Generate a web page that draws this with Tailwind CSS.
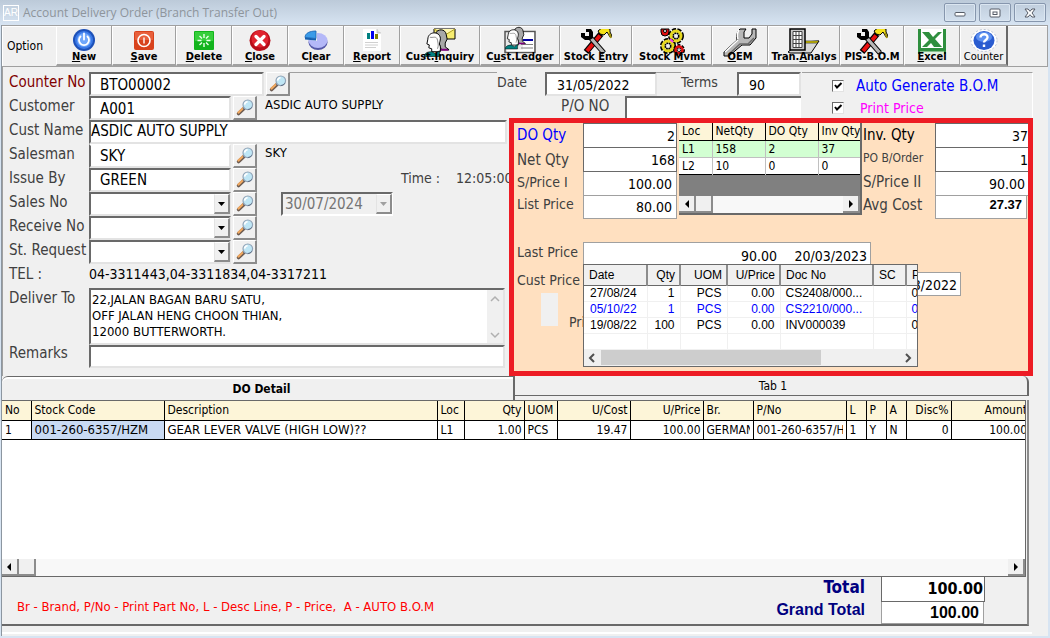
<!DOCTYPE html>
<html lang="en">

<head>
    <meta charset="UTF-8">
    <meta name="viewport" content="width=device-width, initial-scale=1.0">
    <title>Account Delivery Order (Branch Transfer Out)</title>
    <script src="https://cdn.jsdelivr.net/npm/@tailwindcss/browser@4"></script>
</head>

<body class="min-h-screen overflow-hidden bg-[#d7e4f2] font-['DejaVu_Sans_Condensed','Noto_Sans',sans-serif] text-sm text-black">

    <!-- Shared icons -->
    <svg class="hidden">
        <symbol id="lens" viewBox="0 0 18 18">
            <path d="M8.500 9 2.600 14.500" stroke="#6b5a50" stroke-width="3.600" stroke-linecap="round" />
            <path d="M7.500 8.800 2.400 13.600" stroke="#f0a860" stroke-width="2.200" stroke-linecap="round" />
            <path d="m9.500 7.800-2 2" stroke="#606878" stroke-width="2.600" />
            <circle cx="11.800" cy="5.800" r="4.800" fill="#bfe6f5" stroke="#93a5b8" stroke-width="1.200" />
            <path d="M8.600 5.600a3.200 3.200 0 0 1 3-2.800" stroke="#fff" stroke-width="1.600" fill="none" />
            <path d="M15.800 8.400a5 5 0 0 1-4 2.200" stroke="#5f6f86" stroke-width="1" fill="none" />
        </symbol>
        <symbol id="tools" viewBox="0 0 32 26">
            <path d="M21 5 6 23" stroke="#000" stroke-width="6" />
            <path d="M20 6.500 7 22" stroke="#e81010" stroke-width="4" />
            <path d="m9 7 15 17" stroke="#000" stroke-width="5" />
            <path d="m9 7 14.500 16.500" stroke="#b8b8b8" stroke-width="3.400" />
            <path d="M1 4h4v3h4V3H6V0h5l2 3v6l-3 2H5L1 8z" fill="#000" />
            <path d="m18 2 5-4 7 2v3l2 4-2 1-3-5-3 3-4-1z" fill="#f4e11a" stroke="#000" />
            <path d="m29 4 2 5" stroke="#a09010" stroke-width="2" />
        </symbol>
        <symbol id="heads" viewBox="0 0 28 28">
            <path d="M12 4c2-5 10-5 11 1l1 5-2 4v4l4 3h-8z" fill="#a8a8a8" stroke="#000" />
            <path d="M14 20h10l2 2H13z" fill="#800080" />
            <path d="M4 10C4 2 16 1 17 9c0 3-1 4-1 6l1 3v5H8v-3l-3-1 .5-3L3 15z" fill="#fff" stroke="#000" />
            <path d="M6 8c3 1 7-2 8 3s1 6 0 9" fill="none" stroke="#888" />
            <path d="M0 28c1-4 4-5 8-5l4 2 4-3v6z" fill="#008080" stroke="#000" stroke-width=".6" />
        </symbol>
    </svg>

    <!-- Title bar -->
    <header class="flex h-[25px] items-center bg-linear-to-b from-[#bccad9] to-[#d7e4f2] pl-[3px] pr-1">
        <span class="flex size-4 items-center justify-center overflow-hidden border border-white font-['Liberation_Sans'] text-[10px] leading-3 text-white">AR</span>
        <h1 class="ml-1 flex-1 font-['Open_Sans',sans-serif] text-xs text-[#8e959c]">Account Delivery Order (Branch Transfer Out)</h1>
        <div class="flex h-[19px] gap-[3px]">
            <button aria-label="Minimize" class="flex w-8 items-center justify-center rounded-xs border border-[#8696ad] shadow-[inset_0_0_0_1px_#dbe6f1]">
                <svg class="h-3 w-3" viewBox="0 0 12 12"><rect x="1" y="5.500" width="10" height="3.500" rx="1" fill="#fff" stroke="#555b66" /></svg>
            </button>
            <button aria-label="Maximize" class="flex w-8 items-center justify-center rounded-xs border border-[#8696ad] shadow-[inset_0_0_0_1px_#dbe6f1]">
                <svg class="h-3 w-3" viewBox="0 0 12 12"><rect x="1" y="2" width="10" height="8" rx="1" fill="#fff" stroke="#555b66" /><rect x="4" y="5" width="4" height="2.500" fill="#fff" stroke="#555b66" /></svg>
            </button>
            <button aria-label="Close window" class="flex w-8 items-center justify-center rounded-xs border border-[#8696ad] shadow-[inset_0_0_0_1px_#dbe6f1]">
                <svg class="h-3 w-3" viewBox="0 0 12 12"><path d="M1 2h3l2 2.300L8 2h3L8 6l3 4H8L6 7.700 4 10H1l3-4z" fill="#fff" stroke="#555b66" /></svg>
            </button>
        </div>
    </header>

    <div class="ml-px mr-[2px] border-l border-[#8c96a0] bg-[#f0f0f0]">

        <!-- Toolbar -->
        <nav class="flex h-[42px] border-y border-r border-[#a0a0a0] text-[11px] font-bold leading-3 shadow-[inset_1px_1px_0_#fff]">
            <span class="w-[54px] self-center pl-[5px] text-xs font-normal">Option</span>
            <button class="flex w-14 flex-col items-center border-r border-b-2 border-l border-r-[#a0a0a0] border-b-[#a0a0a0] border-l-white pt-[3px]">
                <svg class="size-[22px] shrink-0 overflow-visible" viewBox="0 0 22 22"><circle cx="11" cy="11" r="11" fill="#1c50b8" /><circle cx="11" cy="11" r="9" fill="#3b7ae8" /><circle cx="11" cy="11" r="7" fill="#6fa6fa" /><path d="M7.500 7.500a5 5 0 1 0 7 0M11 4.500v6" fill="none" stroke="#fff" stroke-width="1.800" stroke-linecap="round" /></svg>
                <span class="relative whitespace-nowrap"><u>N</u>ew</span>
            </button>
            <button class="flex w-16 flex-col items-center border-r border-b-2 border-l border-r-[#a0a0a0] border-b-[#a0a0a0] border-l-white pt-[3px]">
                <svg class="size-[22px] shrink-0 overflow-visible" viewBox="0 0 22 22"><rect x="1" y="2" width="20" height="19" rx="2" fill="#d8421c" /><rect x="2" y="3" width="18" height="8" fill="#e8603c" /><circle cx="11" cy="11.500" r="6" fill="none" stroke="#fff" stroke-width="1.600" /><path d="M11 8.500v6" stroke="#fff" stroke-width="1.400" /></svg>
                <span class="relative whitespace-nowrap"><u>S</u>ave</span>
            </button>
            <button class="flex w-14 flex-col items-center border-r border-b-2 border-l border-r-[#a0a0a0] border-b-[#a0a0a0] border-l-white pt-[3px]">
                <svg class="size-[22px] shrink-0 overflow-visible" viewBox="0 0 22 22"><rect x="1" y="2" width="20" height="19" rx="1" fill="#12b41c" /><rect x="2" y="3" width="18" height="9" fill="#35ce3a" /><path d="M11 5v4M11 14v4M4.500 11.500h4M13.500 11.500h4M6.500 7l2.500 2.500M13 13.500l2.500 2.500M15.500 7 13 9.500M9 13.500 6.500 16" stroke="#e8ffe8" stroke-width="1.400" /></svg>
                <span class="relative whitespace-nowrap"><u>D</u>elete</span>
            </button>
            <button class="flex w-14 flex-col items-center border-r border-b-2 border-l border-r-[#a0a0a0] border-b-[#a0a0a0] border-l-white pt-[3px]">
                <svg class="size-[22px] shrink-0 overflow-visible" viewBox="0 0 22 22"><circle cx="11" cy="11.500" r="10.500" fill="#b80c18" /><circle cx="11" cy="10" r="8.500" fill="#e02430" /><path d="m7 7.500 8 8M15 7.500l-8 8" stroke="#fff" stroke-width="3.200" stroke-linecap="round" /></svg>
                <span class="relative whitespace-nowrap"><u>C</u>lose</span>
            </button>
            <button class="flex w-14 flex-col items-center border-r border-b-2 border-l border-r-[#a0a0a0] border-b-[#a0a0a0] border-l-white pt-[3px]">
                <svg class="size-[22px] shrink-0 overflow-visible" viewBox="0 0 22 22"><ellipse cx="13" cy="13.500" rx="9.500" ry="7.500" fill="#5458a8" /><ellipse cx="13" cy="11.500" rx="9.500" ry="7.500" fill="#b4b8f8" /><path d="M12 12V3H0v7z" fill="#f0f0f0" /><path d="M11 9.500V2C5 2 0 4 0 8.500z" fill="#3a9be8" stroke="#1460b0" stroke-width=".8" /><path d="M0 8.500v2l11 1v-2z" fill="#1460b0" /></svg>
                <span class="relative whitespace-nowrap">C<u>l</u>ear</span>
            </button>
            <button class="flex w-14 flex-col items-center border-r border-b-2 border-l border-r-[#a0a0a0] border-b-[#a0a0a0] border-l-white pt-[3px]">
                <svg class="size-[22px] shrink-0 overflow-visible" viewBox="0 0 22 22"><path d="M2 0h14l4 4v18H2z" fill="#fff" /><path d="M16 0v4h4" fill="#ddd" stroke="#aaa" stroke-width=".6" /><path d="M6 4h3v6H6z" fill="#008080" /><path d="M10 2h3v8h-3z" fill="#0000f0" /><path d="M14 5h3v5h-3z" fill="#808000" /><path d="M4 13.500h13M4 16h13M4 18.500h11" stroke="#d0d0d0" /></svg>
                <span class="relative whitespace-nowrap"><u>R</u>eport</span>
            </button>
            <button class="flex w-20 flex-col items-center border-r border-b-2 border-l border-r-[#a0a0a0] border-b-[#a0a0a0] border-l-white pt-[3px]">
                <svg class="size-[22px] shrink-0 overflow-visible" viewBox="0 0 22 22"><path d="M5 0h21v10H5z" fill="#f6ec70" stroke="#000" /><path d="m5 0 11 6L26 0" fill="#fff8b0" stroke="#b0a020" /><use href="#heads" x="-5" y="0" width="27" height="28" /></svg>
                <span class="relative whitespace-nowrap">Cust.<u>I</u>nquiry</span>
            </button>
            <button class="flex w-20 flex-col items-center border-r border-b-2 border-l border-r-[#a0a0a0] border-b-[#a0a0a0] border-l-white pt-[3px]">
                <svg class="size-[22px] shrink-0 overflow-visible" viewBox="0 0 22 22"><path d="M-4 2.500h30v21H-4z" fill="#e8e8e8" stroke="#555" stroke-width="1.500" /><path d="M14 3.500h11v19H-2v-2h16z" fill="#fff" /><path d="M14 11h10" stroke="#0000a0" stroke-width="2" /><path d="M12 15.500h12M12 19h12" stroke="#808080" /><use href="#heads" x="-4" y="-3" width="22" height="24" /></svg>
                <span class="relative whitespace-nowrap">C<u>u</u>st.Ledger</span>
            </button>
            <button class="flex w-[72px] flex-col items-center border-r border-b-2 border-l border-r-[#a0a0a0] border-b-[#a0a0a0] border-l-white pt-[3px]">
                <svg class="size-[22px] shrink-0 overflow-visible" viewBox="0 0 22 22"><use href="#tools" x="-5" y="0" width="32" height="26" /></svg>
                <span class="relative whitespace-nowrap">Stock <u>E</u>ntry</span>
            </button>
            <button class="flex w-20 flex-col items-center border-r border-b-2 border-l border-r-[#a0a0a0] border-b-[#a0a0a0] border-l-white pt-[3px]">
                <svg class="size-[22px] shrink-0 overflow-visible" viewBox="0 0 22 22">
                    <g fill="none">
                        <path d="M0 0h8v3a4 4 0 0 1-8 0z" fill="#e01010" stroke="#000" /><circle cx="4" cy="2" r="1.500" fill="#fff" stroke="#000" />
                        <circle cx="15" cy="7" r="5" stroke="#000" stroke-width="6" stroke-dasharray="3 1" /><circle cx="15" cy="7" r="5" stroke="#e6d820" stroke-width="3" />
                        <circle cx="7" cy="17" r="5" stroke="#000" stroke-width="6" stroke-dasharray="3 1" /><circle cx="7" cy="17" r="5" stroke="#e6d820" stroke-width="3" />
                        <circle cx="18" cy="21" r="3.500" stroke="#000" stroke-width="5" stroke-dasharray="2 1" /><circle cx="18" cy="21" r="3.500" stroke="#e01010" stroke-width="2.500" />
                        <path d="m9 10 3 3" stroke="#f040f0" stroke-width="2" />
                    </g>
                </svg>
                <span class="relative whitespace-nowrap">Stock <u>M</u>vmt</span>
            </button>
            <button class="flex w-14 flex-col items-center border-r border-b-2 border-l border-r-[#a0a0a0] border-b-[#a0a0a0] border-l-white pt-[3px]">
                <svg class="size-[22px] shrink-0 overflow-visible" viewBox="0 0 22 22"><path d="m-5 23 13-12c-1-5 0-8 3-11h6l-2 3v6h5l3-4V0h4v9l-6 7h-8L0 27h-5z" fill="#b8b8b8" stroke="#000" /><path d="M-4 23 9 11M10 1c-2 3-2 6-1 9" stroke="#fff" stroke-width="1.500" fill="none" /><path d="m-1 26 12-11h8l6-6" stroke="#686868" stroke-width="1.500" fill="none" /></svg>
                <span class="relative whitespace-nowrap"><u>O</u>EM</span>
            </button>
            <button class="flex w-[72px] flex-col items-center border-r border-b-2 border-l border-r-[#a0a0a0] border-b-[#a0a0a0] border-l-white pt-[3px]">
                <svg class="size-[22px] shrink-0 overflow-visible" viewBox="0 0 22 22"><path d="m10 13 16-1-8 12H-3l-2-1 4-3z" fill="#d8d8d8" stroke="#000" /><path d="M12 12h14l-2 2H12z" fill="#f0e010" stroke="#000" stroke-width=".6" /><path d="M-3 0h15v21H-3z" fill="#c8c8c8" stroke="#000" stroke-width="1.500" /><path d="M0 2.500h9v16H0z" fill="#fff" /><path d="M0 2.500h9v16H0zM3 2.500v16M6 2.500v16M0 6.500h9M0 10.500h9M0 14.500h9" fill="none" stroke="#404040" stroke-width="1" /></svg>
                <span class="relative whitespace-nowrap">Tran.<u>A</u>nalys</span>
            </button>
            <button class="flex w-16 flex-col items-center border-r border-b-2 border-l border-r-[#a0a0a0] border-b-[#a0a0a0] border-l-white pt-[3px]">
                <svg class="size-[22px] shrink-0 overflow-visible" viewBox="0 0 22 22"><use href="#tools" x="-5" y="0" width="32" height="26" /></svg>
                <span class="relative whitespace-nowrap">PIS-B.O.M</span>
            </button>
            <button class="flex w-14 flex-col items-center border-r border-b-2 border-l border-r-[#a0a0a0] border-b-[#a0a0a0] border-l-white pt-[3px]">
                <svg class="size-[22px] shrink-0 overflow-visible" viewBox="0 0 22 22"><path d="M-3 0h28v25H-3z" fill="#2f8f3e" /><path d="M0 0h22v19H0z" fill="#fff" /><path d="M1 3h7l4 5 5-5h4l-7 7 7 8h-8l-3-4-4 4H1l7-7z" fill="#2f8f3e" /><path d="M-1 24h24" stroke="#e0f0e0" stroke-width="3" /></svg>
                <span class="relative whitespace-nowrap"><u>E</u>xcel</span>
            </button>
            <button class="flex w-12 flex-col items-center border-r-2 border-b-2 border-l border-r-[#696969] border-b-[#a0a0a0] border-l-white pt-[3px] font-normal">
                <svg class="size-[22px] shrink-0 overflow-visible" viewBox="0 0 22 22"><ellipse cx="11" cy="11.500" rx="13" ry="11" fill="#fff" stroke="#a8b4c8" stroke-width=".8" stroke-dasharray="2 2" /><ellipse cx="11" cy="11.500" rx="10.500" ry="9.500" fill="#2a5cd0" /><ellipse cx="11" cy="8" rx="8" ry="5" fill="#5c90f0" /><path d="M7.500 8.500c0-4.500 7.500-4 7 0-.2 2.500-3.500 2.500-3.500 5M11 15.500V18" fill="none" stroke="#fff" stroke-width="2.400" /></svg>
                <span class="relative whitespace-nowrap">Counter</span>
            </button>
        </nav>

        <!-- Document header -->
        <form class="mr-[15px] border-l border-[#a0a0a0] pt-[5px] text-[#404040]">
            <div class="flex">
                <div class="flex w-[494px] flex-col text-[15px]">
                    <div class="flex h-6">
                        <label for="counterNo" class="w-[86px] pl-[6px] leading-5 whitespace-nowrap text-[#800000]">Counter No</label>
                        <input id="counterNo" value="BTO00002" class="h-6 w-[175px] border-2 border-t-[#696969] border-r-[#e3e3e3] border-b-[#e3e3e3] border-l-[#696969] bg-white pt-[2px] pl-[9px] text-black">
                        <button type="button" aria-label="Find counter" class="ml-[2px] flex w-6 items-start justify-center border-t border-r-2 border-b-2 border-l border-t-white border-r-[#8c8c8c] border-b-[#8c8c8c] border-l-white pt-[2px]"><svg class="size-[18px]"><use href="#lens" /></svg></button>
                        <span class="flex-1 border-t border-[#a0a0a0]"></span>
                    </div>
                    <div class="flex h-[22px]">
                        <label for="customer" class="w-[86px] pl-[6px] leading-5">Customer</label>
                        <input id="customer" value="A001" class="h-6 w-[142px] border-2 border-t-[#696969] border-r-[#e3e3e3] border-b-[#e3e3e3] border-l-[#696969] bg-white pt-[2px] pl-[9px] text-black">
                        <button type="button" aria-label="Find customer" class="ml-[2px] flex h-6 w-6 items-start justify-center border-t border-r-2 border-b-2 border-l border-t-white border-r-[#8c8c8c] border-b-[#8c8c8c] border-l-white pt-[2px]"><svg class="size-[18px]"><use href="#lens" /></svg></button>
                        <span class="ml-2 text-[13px] leading-[18px] text-black">ASDIC AUTO SUPPLY</span>
                    </div>
                </div>
                <div class="w-[305px]">
                    <div class="flex h-6">
                        <label for="date" class="w-12 leading-5">Date</label>
                        <input id="date" value="31/05/2022" class="h-6 w-28 border-2 border-t-[#696969] border-r-[#e3e3e3] border-b-[#e3e3e3] border-l-[#696969] bg-white pt-[2px] pl-[10px] text-black">
                        <span class="w-6 border-t border-[#a0a0a0]"></span>
                        <label for="terms" class="w-14 leading-5">Terms</label>
                        <input id="terms" value="90" class="h-6 w-16 border-2 border-t-[#696969] border-r-[#e3e3e3] border-b-[#e3e3e3] border-l-[#696969] bg-white pt-[2px] pl-[10px] text-black">
                    </div>
                    <div class="flex h-[22px] pl-16">
                        <label for="poNo" class="w-16 text-[15px] leading-5">P/O NO</label>
                        <input id="poNo" class="h-[22px] w-44 border-t-2 border-l-2 border-[#696969] bg-white px-1 text-black">
                    </div>
                </div>
                <div class="flex flex-1 flex-col gap-1 border-t border-r border-t-[#a0a0a0] border-r-white pt-1 pl-[30px]">
                    <div class="flex items-center leading-[18px]">
                        <span class="relative mr-3 size-3">
                            <input type="checkbox" id="autoBom" checked class="block size-3 appearance-none border border-t-[#696969] border-r-[#e3e3e3] border-b-[#e3e3e3] border-l-[#696969] bg-white">
                            <svg class="pointer-events-none absolute inset-0 size-3" viewBox="0 0 12 12"><path d="m3 5 2 2.500 4.500-4.500" fill="none" stroke="#000" stroke-width="2" /></svg>
                        </span>
                        <label for="autoBom" class="text-[15px] text-[#0000ff]">Auto Generate B.O.M</label>
                    </div>
                    <div class="flex items-center leading-[18px]">
                        <span class="relative mr-4 size-3">
                            <input type="checkbox" id="printPrice" checked class="block size-3 appearance-none border border-t-[#696969] border-r-[#e3e3e3] border-b-[#e3e3e3] border-l-[#696969] bg-white">
                            <svg class="pointer-events-none absolute inset-0 size-3" viewBox="0 0 12 12"><path d="m3 5 2 2.500 4.500-4.500" fill="none" stroke="#000" stroke-width="2" /></svg>
                        </span>
                        <label for="printPrice" class="text-[#ff00ff]">Print Price</label>
                    </div>
                </div>
            </div>

            <div class="flex">
                <div class="min-w-0 flex-1 overflow-hidden pt-[2px] text-[15px]">
                    <div class="flex h-6">
                        <label for="custName" class="w-[86px] pl-[6px] leading-5">Cust Name</label>
                        <input id="custName" value="ASDIC AUTO SUPPLY" class="mr-[2px] min-w-0 flex-1 border-2 border-t-[#696969] border-r-[#e3e3e3] border-b-[#e3e3e3] border-l-[#696969] bg-white text-black">
                    </div>
                    <div class="flex h-6">
                        <label for="salesman" class="w-[86px] pl-[6px] leading-5">Salesman</label>
                        <input id="salesman" value="SKY" class="w-[142px] border-2 border-t-white border-r-[#e3e3e3] border-b-[#e3e3e3] border-l-[#696969] bg-white pt-[2px] pl-[9px] text-black">
                        <button type="button" aria-label="Find salesman" class="ml-[2px] flex w-6 items-start justify-center border-t border-r-2 border-b-2 border-l border-t-white border-r-[#8c8c8c] border-b-[#8c8c8c] border-l-white pt-[2px]"><svg class="size-[18px]"><use href="#lens" /></svg></button>
                        <span class="ml-2 text-[13px] leading-[18px] text-black">SKY</span>
                    </div>
                    <div class="flex h-6">
                        <label for="issueBy" class="w-[86px] pl-[6px] leading-5">Issue By</label>
                        <input id="issueBy" value="GREEN" class="w-[142px] border-2 border-t-[#696969] border-r-[#e3e3e3] border-b-[#e3e3e3] border-l-[#696969] bg-white pt-[2px] pl-[9px] text-black">
                        <button type="button" aria-label="Find user" class="ml-[2px] flex w-6 items-start justify-center border-t border-r-2 border-b-2 border-l border-t-white border-r-[#8c8c8c] border-b-[#8c8c8c] border-l-white pt-[2px]"><svg class="size-[18px]"><use href="#lens" /></svg></button>
                        <span class="ml-auto w-[108px] text-sm leading-5 whitespace-pre">Time :    12:05:00</span>
                    </div>
                    <div class="flex">
                        <div>
                            <div class="flex h-6">
                                <label for="salesNo" class="w-[86px] pl-[6px] leading-5">Sales No</label>
                                <span class="relative w-[142px]">
                                    <select id="salesNo" class="h-6 w-full appearance-none border-2 border-t-[#696969] border-r-[#e3e3e3] border-b-[#e3e3e3] border-l-[#696969] bg-white text-black"><option></option></select>
                                    <svg class="pointer-events-none absolute top-[2px] right-[1px] h-5 w-4 border-t border-r-2 border-b-2 border-l border-t-white border-r-[#8c8c8c] border-b-[#8c8c8c] border-l-[#e3e3e3] bg-[#f0f0f0]" viewBox="0 0 13 17"><path d="M3 7h7L6.500 11z" fill="#000" /></svg>
                                </span>
                                <button type="button" aria-label="Find sales no" class="ml-[2px] flex w-6 items-start justify-center border-t border-r-2 border-b-2 border-l border-t-white border-r-[#8c8c8c] border-b-[#8c8c8c] border-l-white pt-[2px]"><svg class="size-[18px]"><use href="#lens" /></svg></button>
                            </div>
                            <div class="flex h-6">
                                <label for="receiveNo" class="w-[86px] pl-[6px] leading-5 whitespace-nowrap">Receive No</label>
                                <span class="relative w-[142px]">
                                    <select id="receiveNo" class="h-6 w-full appearance-none border-2 border-t-[#696969] border-r-[#e3e3e3] border-b-[#e3e3e3] border-l-[#696969] bg-white text-black"><option></option></select>
                                    <svg class="pointer-events-none absolute top-[2px] right-[1px] h-5 w-4 border-t border-r-2 border-b-2 border-l border-t-white border-r-[#8c8c8c] border-b-[#8c8c8c] border-l-[#e3e3e3] bg-[#f0f0f0]" viewBox="0 0 13 17"><path d="M3 7h7L6.500 11z" fill="#000" /></svg>
                                </span>
                                <button type="button" aria-label="Find receive no" class="ml-[2px] flex w-6 items-start justify-center border-t border-r-2 border-b-2 border-l border-t-white border-r-[#8c8c8c] border-b-[#8c8c8c] border-l-white pt-[2px]"><svg class="size-[18px]"><use href="#lens" /></svg></button>
                            </div>
                            <div class="flex h-6">
                                <label for="stRequest" class="w-[86px] pl-[6px] leading-5 whitespace-nowrap">St. Request</label>
                                <span class="relative w-[142px]">
                                    <select id="stRequest" class="h-6 w-full appearance-none border-2 border-t-[#696969] border-r-[#e3e3e3] border-b-[#e3e3e3] border-l-[#696969] bg-white text-black"><option></option></select>
                                    <svg class="pointer-events-none absolute top-[2px] right-[1px] h-5 w-4 border-t border-r-2 border-b-2 border-l border-t-white border-r-[#8c8c8c] border-b-[#8c8c8c] border-l-[#e3e3e3] bg-[#f0f0f0]" viewBox="0 0 13 17"><path d="M3 7h7L6.500 11z" fill="#000" /></svg>
                                </span>
                                <button type="button" aria-label="Find request" class="ml-[2px] flex w-6 items-start justify-center border-t border-r-2 border-b-2 border-l border-t-white border-r-[#8c8c8c] border-b-[#8c8c8c] border-l-white pt-[2px]"><svg class="size-[18px]"><use href="#lens" /></svg></button>
                            </div>
                        </div>
                        <span class="relative ml-6 h-6 w-28">
                            <select disabled aria-label="Document date" class="h-6 w-full appearance-none border-2 border-t-[#696969] border-r-white border-b-white border-l-[#696969] pl-[2px] text-[#757575]"><option>30/07/2024</option></select>
                            <svg class="pointer-events-none absolute top-[2px] right-[1px] h-5 w-4 border-t border-r-2 border-b-2 border-l border-t-white border-r-[#8c8c8c] border-b-[#8c8c8c] border-l-[#e3e3e3] bg-[#f0f0f0]" viewBox="0 0 13 17"><path d="M3 7h7L6.500 11z" fill="#a0a0a0" /></svg>
                        </span>
                    </div>
                    <div class="flex h-6">
                        <span class="w-[86px] pl-[6px] leading-5">TEL :</span>
                        <span class="text-sm leading-5 text-black">04-3311443,04-3311834,04-3317211</span>
                    </div>
                    <div class="flex h-[57px]">
                        <label for="deliverTo" class="w-[86px] pl-[6px] leading-5">Deliver To</label>
                        <div class="mr-1 flex min-w-0 flex-1 border-2 border-t-[#696969] border-r-[#e3e3e3] border-b-[#e3e3e3] border-l-[#696969] bg-white">
                            <textarea id="deliverTo" class="flex-1 resize-none overflow-hidden pt-[2px] pl-px text-[13px] leading-4 text-black">22,JALAN BAGAN BARU SATU,
OFF JALAN HENG CHOON THIAN,
12000 BUTTERWORTH.</textarea>
                            <svg class="w-4 bg-[#f0f0f0]" viewBox="0 0 16 53"><path d="m4 11 4-4 4 4M4 43l4 4 4-4" fill="none" stroke="#b0b0b0" stroke-width="1.500" /></svg>
                        </div>
                    </div>
                    <div class="flex h-[23px]">
                        <label for="remarks" class="w-[86px] pl-[6px] leading-4">Remarks</label>
                        <input id="remarks" class="mr-1 min-w-0 flex-1 border-2 border-t-[#696969] border-r-[#e3e3e3] border-b-[#e3e3e3] border-l-[#696969] bg-white text-black">
                    </div>
                </div>

                <!-- Stock and price panel -->
                <section class="h-[258px] w-[524px] border-[5px] border-[#ed1c24] bg-[#ffe0c0]">
                    <div class="grid grid-cols-[69px_94px_185px_73px_1fr] grid-rows-[25px_24px_24px_23px]">
                        <label for="doQty" class="pl-[3px] text-[15px] leading-6 text-[#0000ff]">DO Qty</label>
                        <input id="doQty" value="2" class="border border-[#696969] bg-white pr-px text-right text-black">
                        <div class="row-span-4 ml-[2px] flex h-[92px] flex-col overflow-hidden border-r-2 border-b-2 border-[#696969] bg-[#808080] text-xs text-black">
                            <table class="w-[190px] table-fixed text-left whitespace-nowrap">
                                <thead>
                                    <tr class="h-[17px] bg-[#fdf5d8]">
                                        <th class="w-[33px] border-r border-b border-black pl-[3px] font-normal">Loc</th>
                                        <th class="w-[53px] border-r border-b border-black pl-[3px] font-normal">NetQty</th>
                                        <th class="w-[53px] border-r border-b border-black pl-[3px] font-normal">DO Qty</th>
                                        <th class="border-b border-black pl-[3px] font-normal">Inv Qty</th>
                                    </tr>
                                </thead>
                                <tbody>
                                    <tr class="h-[17px] border-b border-[#c0c0c0] bg-[#d2ffd2]">
                                        <td class="border-r border-[#c0c0c0] pl-[3px]">L1</td>
                                        <td class="border-r border-[#c0c0c0] pl-[3px]">158</td>
                                        <td class="border-r border-[#c0c0c0] pl-[3px]">2</td>
                                        <td class="pl-[3px]">37</td>
                                    </tr>
                                    <tr class="h-[17px] border-b border-black bg-white">
                                        <td class="border-r border-r-[#c0c0c0] pl-[3px]">L2</td>
                                        <td class="border-r border-r-[#c0c0c0] pl-[3px]">10</td>
                                        <td class="border-r border-r-[#c0c0c0] pl-[3px]">0</td>
                                        <td class="pl-[3px]">0</td>
                                    </tr>
                                </tbody>
                            </table>
                            <div class="mt-auto flex h-[17px] bg-[#f8f8f8]">
                                <button type="button" aria-label="Scroll left" class="w-[17px] border-r-2 border-b-2 border-[#8c8c8c] bg-[#f0f0f0]"><svg class="size-[15px]" viewBox="0 0 15 15"><path d="M10 4v8L6 8z" /></svg></button>
                                <span class="w-[17px] border-r-2 border-b-2 border-[#8c8c8c] bg-[#f0f0f0]"></span>
                                <button type="button" aria-label="Scroll right" class="ml-auto w-[17px] border-r-2 border-b-2 border-[#8c8c8c] bg-[#f0f0f0]"><svg class="size-[15px]" viewBox="0 0 15 15"><path d="M6 4v8l4-4z" /></svg></button>
                            </div>
                        </div>
                        <label for="invQty" class="pl-px text-[15px] leading-6 text-black">Inv. Qty</label>
                        <input id="invQty" value="37" class="min-w-0 border border-r-0 border-[#696969] bg-white text-right text-black">

                        <label for="netQty" class="pl-[3px] text-[15px] leading-6">Net Qty</label>
                        <input id="netQty" value="168" class="border border-t-0 border-[#696969] bg-white pr-px text-right text-black">
                        <label for="poOrder" class="pl-px text-xs leading-5">PO B/Order</label>
                        <input id="poOrder" value="1" class="min-w-0 border border-t-0 border-r-0 border-[#696969] bg-white text-right text-black">

                        <label for="sPrice1" class="pl-[3px] leading-5">S/Price I</label>
                        <input id="sPrice1" value="100.00" class="border border-t-0 border-[#a0a0a0] bg-white pr-1 text-right text-black">
                        <label for="sPrice2" class="pl-px text-[15px] leading-5">S/Price II</label>
                        <input id="sPrice2" value="90.00" class="min-w-0 border border-t-0 border-r-0 border-[#a0a0a0] bg-white pr-[3px] text-right text-black">

                        <label for="listPrice" class="pl-[3px] leading-4">List Price</label>
                        <input id="listPrice" value="80.00" class="border border-t-0 border-[#a0a0a0] bg-white pr-1 text-right text-black">
                        <label for="avgCost" class="pl-px text-[15px] leading-[18px]">Avg Cost</label>
                        <input id="avgCost" value="27.37" class="mr-px min-w-0 border border-t-0 border-[#a0a0a0] bg-white pr-1 pb-1 text-right font-['Liberation_Sans'] text-[13px] font-bold text-black">
                    </div>

                    <div class="relative mt-[23px]">
                        <div class="flex h-[23px]">
                            <label for="lastPrice" class="w-[69px] pl-[3px] leading-5">Last Price</label>
                            <input id="lastPrice" value="90.00" class="w-[194px] border-t border-l border-[#a0a0a0] bg-white pt-1 text-right text-black">
                            <input aria-label="Last price date" value="20/03/2023" class="w-[94px] border-t border-r border-[#a0a0a0] bg-white pt-1 pr-[3px] text-right text-black">
                        </div>
                        <div class="mt-[7px] flex h-6">
                            <label for="custPrice" class="w-[69px] pl-[3px] leading-4 whitespace-nowrap">Cust Price</label>
                            <input id="custPrice" value="19/08/2022" class="w-[378px] border border-[#a0a0a0] bg-white pt-[2px] pr-[3px] text-right text-black">
                        </div>
                        <div class="flex pl-[27px]">
                            <span class="-mt-[3px] h-[33px] w-[17px] bg-[#f0f0f0]"></span>
                            <span class="pt-[14px] pl-[11px] leading-6">Price</span>
                        </div>

                        <!-- Price history drop-down -->
                        <div class="absolute top-[22px] left-[69px] w-[335px] overflow-hidden border border-[#696969] bg-white font-['Liberation_Sans',sans-serif] text-xs text-black">
                            <table class="w-[350px] table-fixed whitespace-nowrap">
                                <thead>
                                    <tr class="h-5 border-b border-[#696969] bg-[#f0f0f0]">
                                        <th class="w-[63px] border-r-2 border-[#8c8c8c] pl-[5px] text-left font-normal">Date</th>
                                        <th class="w-[33px] border-r-2 border-[#8c8c8c] pr-1 text-right font-normal">Qty</th>
                                        <th class="w-[47px] border-r-2 border-[#8c8c8c] pr-1 text-right font-normal">UOM</th>
                                        <th class="w-[53px] border-r-2 border-[#8c8c8c] pr-1 text-right font-normal">U/Price</th>
                                        <th class="w-[93px] border-r-2 border-[#8c8c8c] pl-[5px] text-left font-normal">Doc No</th>
                                        <th class="w-[33px] border-r-2 border-[#8c8c8c] pl-[5px] text-left font-normal">SC</th>
                                        <th class="pl-[5px] text-left font-normal">P</th>
                                    </tr>
                                </thead>
                                <tbody>
                                    <tr class="h-4 border-b border-[#f0f0f0] leading-[15px]">
                                        <td class="border-r border-[#f0f0f0] pl-[6px]">27/08/24</td>
                                        <td class="border-r border-[#f0f0f0] pr-[5px] text-right">1</td>
                                        <td class="border-r border-[#f0f0f0] pr-[5px] text-right">PCS</td>
                                        <td class="border-r border-[#f0f0f0] pr-[5px] text-right">0.00</td>
                                        <td class="border-r border-[#f0f0f0] pl-[5px]">CS2408/000...</td>
                                        <td class="border-r border-[#f0f0f0]"></td>
                                        <td class="pl-[5px]">0.00</td>
                                    </tr>
                                    <tr class="h-4 border-b border-[#f0f0f0] leading-[15px] text-[#0000ff]">
                                        <td class="border-r border-[#f0f0f0] pl-[6px]">05/10/22</td>
                                        <td class="border-r border-[#f0f0f0] pr-[5px] text-right">1</td>
                                        <td class="border-r border-[#f0f0f0] pr-[5px] text-right">PCS</td>
                                        <td class="border-r border-[#f0f0f0] pr-[5px] text-right">0.00</td>
                                        <td class="border-r border-[#f0f0f0] pl-[5px]">CS2210/000...</td>
                                        <td class="border-r border-[#f0f0f0]"></td>
                                        <td class="pl-[5px]">0.00</td>
                                    </tr>
                                    <tr class="h-4 border-b border-[#f0f0f0] leading-[15px]">
                                        <td class="border-r border-[#f0f0f0] pl-[6px]">19/08/22</td>
                                        <td class="border-r border-[#f0f0f0] pr-[5px] text-right">100</td>
                                        <td class="border-r border-[#f0f0f0] pr-[5px] text-right">PCS</td>
                                        <td class="border-r border-[#f0f0f0] pr-[5px] text-right">0.00</td>
                                        <td class="border-r border-[#f0f0f0] pl-[5px]">INV000039</td>
                                        <td class="border-r border-[#f0f0f0]"></td>
                                        <td class="pl-[5px]">0.00</td>
                                    </tr>
                                    <tr class="h-4">
                                        <td class="border-r border-[#f0f0f0]"></td>
                                        <td class="border-r border-[#f0f0f0]"></td>
                                        <td class="border-r border-[#f0f0f0]"></td>
                                        <td class="border-r border-[#f0f0f0]"></td>
                                        <td class="border-r border-[#f0f0f0]"></td>
                                        <td class="border-r border-[#f0f0f0]"></td>
                                        <td></td>
                                    </tr>
                                </tbody>
                            </table>
                            <div class="flex h-[17px] items-center bg-[#f0f0f0]">
                                <svg class="h-4 w-[17px]" viewBox="0 0 17 16"><path d="m10 4-4 4 4 4" fill="none" stroke="#505050" stroke-width="2" /></svg>
                                <span class="h-[15px] w-[220px] bg-[#cdcdcd]"></span>
                                <svg class="ml-auto h-4 w-[17px]" viewBox="0 0 17 16"><path d="m6 4 4 4-4 4" fill="none" stroke="#505050" stroke-width="2" /></svg>
                            </div>
                        </div>
                    </div>
                </section>
            </div>
        </form>

        <!-- Detail tabs -->
        <div class="mr-[19px] flex h-6 text-xs">
            <button class="w-[513px] rounded-tl-md border-t border-r-2 border-[#696969] pl-2 font-bold shadow-[inset_0_2px_0_#fff]">DO Detail</button>
            <button class="mb-1 flex-1 rounded-tr-md border-r-2 border-b border-[#696969] pl-1">Tab 1</button>
        </div>

        <div class="mr-[19px] border-r-2 border-b-2 border-r-[#8c8c8c] border-b-[#696969]">
            <div class="mr-px flex h-[177px] flex-col overflow-hidden border-y border-r border-[#696969] bg-white text-xs">
                <table class="w-[calc(100%+4px)] table-fixed text-left whitespace-nowrap">
                    <thead>
                        <tr class="h-[19px] border-b border-black bg-[#fdf5d8]">
                            <th class="w-[29px] border-r border-black pl-[3px] font-normal">No</th>
                            <th class="w-[133px] border-r border-black pl-[3px] font-normal">Stock Code</th>
                            <th class="w-[273px] border-r border-black pl-[3px] font-normal">Description</th>
                            <th class="w-[27px] border-r border-black pl-[3px] font-normal">Loc</th>
                            <th class="w-[60px] border-r border-black pr-[2px] text-right font-normal">Qty</th>
                            <th class="w-[33px] border-r border-black pl-[3px] font-normal">UOM</th>
                            <th class="w-[73px] border-r border-black pr-[2px] text-right font-normal">U/Cost</th>
                            <th class="w-[73px] border-r border-black pr-[2px] text-right font-normal">U/Price</th>
                            <th class="w-[50px] border-r border-black pl-[3px] font-normal">Br.</th>
                            <th class="w-[93px] border-r border-black pl-[3px] font-normal">P/No</th>
                            <th class="w-5 border-r border-black pl-[3px] font-normal">L</th>
                            <th class="w-5 border-r border-black pl-[3px] font-normal">P</th>
                            <th class="w-5 border-r border-black pl-[3px] font-normal">A</th>
                            <th class="w-[45px] border-r border-black pr-[2px] text-right font-normal">Disc%</th>
                            <th class="pr-[2px] text-right font-normal">Amount</th>
                        </tr>
                    </thead>
                    <tbody>
                        <tr class="h-[19px] border-b border-black leading-4">
                            <td class="border-r border-black pl-[3px]">1</td>
                            <td class="border-r border-black bg-[#c9daf3] pl-[3px] text-[13px]">001-260-6357/HZM</td>
                            <td class="border-r border-black pl-[3px] text-[13px]">GEAR LEVER VALVE (HIGH LOW)??</td>
                            <td class="border-r border-black pl-[3px]">L1</td>
                            <td class="border-r border-black pr-[2px] text-right">1.00</td>
                            <td class="border-r border-black pl-[3px]">PCS</td>
                            <td class="border-r border-black pr-[2px] text-right">19.47</td>
                            <td class="border-r border-black pr-[2px] text-right">100.00</td>
                            <td class="border-r border-black px-[3px]"><div class="overflow-hidden">GERMANY</div></td>
                            <td class="border-r border-black px-[3px]"><div class="overflow-hidden">001-260-6357/HZM</div></td>
                            <td class="border-r border-black pl-[3px]">1</td>
                            <td class="border-r border-black pl-[3px]">Y</td>
                            <td class="border-r border-black pl-[3px]">N</td>
                            <td class="border-r border-black pr-[2px] text-right">0</td>
                            <td class="pr-[2px] text-right">100.00</td>
                        </tr>
                    </tbody>
                </table>
                <div class="mt-auto flex h-[17px] bg-[#f8f8f8]">
                    <button aria-label="Scroll left" class="w-[17px] border-r-2 border-b-2 border-[#8c8c8c] bg-[#f0f0f0]"><svg class="size-[15px]" viewBox="0 0 15 15"><path d="M9 4v8L5 8z" /></svg></button>
                    <span class="w-[17px] border-r-2 border-b-2 border-[#8c8c8c] bg-[#f0f0f0]"></span>
                    <button aria-label="Scroll right" class="ml-auto w-[17px] border-r-2 border-b-2 border-[#8c8c8c] bg-[#f0f0f0]"><svg class="size-[15px]" viewBox="0 0 15 15"><path d="M6 4v8l4-4z" /></svg></button>
                </div>
            </div>

            <!-- Totals -->
            <footer class="flex h-[47px]">
                <p class="flex-1 self-end pb-[7px] pl-[15px] text-[13px] whitespace-pre text-[#ff0000]">Br - Brand, P/No - Print Part No, L - Desc Line, P - Price,  A - AUTO B.O.M</p>
                <div class="mr-[42px] grid grid-cols-[105px_104px] grid-rows-[25px_22px] text-base font-bold">
                    <label for="total" class="pr-4 text-right text-[17px] leading-5 text-[#000080]">Total</label>
                    <input id="total" value="100.00" class="border border-t-0 border-[#696969] bg-white pr-px text-right">
                    <label for="grandTotal" class="pr-4 text-right font-['Liberation_Sans'] leading-4 whitespace-nowrap text-[#000080]">Grand Total</label>
                    <input id="grandTotal" value="100.00" class="mr-px min-w-0 border border-t-0 border-[#a0a0a0] bg-white pr-1 text-right font-['Liberation_Sans']">
                </div>
            </footer>
        </div>
        <div class="mr-4 h-2 border-b-2 border-white"></div>
        <div class="h-[2px]"></div>
    </div>
</body>

</html>
